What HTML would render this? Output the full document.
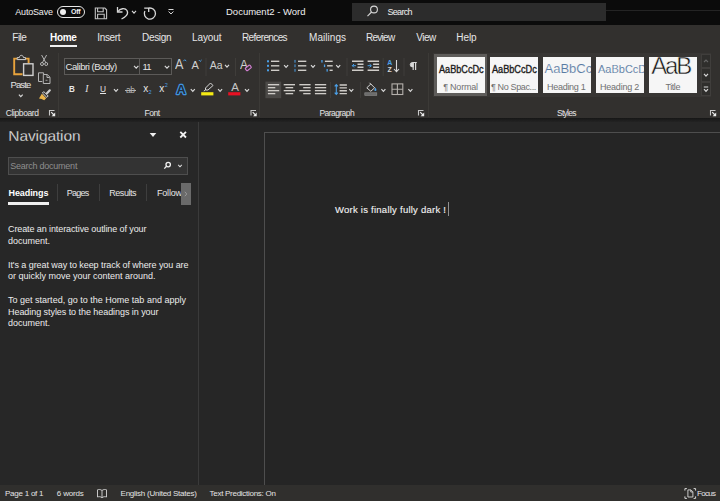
<!DOCTYPE html>
<html>
<head>
<meta charset="utf-8">
<title>Document2 - Word</title>
<style>
html,body{margin:0;padding:0;}
body{width:720px;height:501px;overflow:hidden;background:#262626;font-family:"Liberation Sans",sans-serif;color:#e8e8e8;position:relative;}
.abs{position:absolute;}
.t{position:absolute;white-space:nowrap;line-height:1;color:#e6e6e6;}
.tile{position:absolute;top:57px;height:35.6px;background:#f6f6f6;overflow:hidden;}
.tile .t{color:#222;}
</style>
</head>
<body>
<div class="abs" style="left:0px;top:0px;width:720px;height:25px;background:#0b0b0b;"></div>
<div class="abs" style="left:0px;top:24.5px;width:720px;height:93.5px;background:#32302e;"></div>
<div class="abs" style="left:0px;top:118px;width:720px;height:3.5px;background:linear-gradient(#161616,#232323);"></div>
<div class="abs" style="left:0px;top:121.5px;width:198px;height:364.5px;background:#272727;"></div>
<div class="abs" style="left:198px;top:121.5px;width:1px;height:364.5px;background:#3a3a3a;"></div>
<div class="abs" style="left:199px;top:121.5px;width:521px;height:364.5px;background:#262626;"></div>
<div class="abs" style="left:264px;top:132px;width:460px;height:360px;background:#252525;border:1px solid #4e4e4e;box-sizing:border-box;"></div>
<div class="abs" style="left:0px;top:485px;width:720px;height:16px;background:#302f2d;"></div>
<div class="t " style="left:15.30px;top:7.52px;font-size:9px;color:#f0f0f0;letter-spacing:-0.190px;">AutoSave</div>
<div class="abs" style="left:57px;top:5.8px;width:28.2px;height:12px;border:1px solid #e8e8e8;box-sizing:border-box;border-radius:7px;"></div>
<div class="abs" style="left:60.2px;top:8.8px;width:6px;height:6px;background:#f0f0f0;border-radius:3px;"></div>
<div class="t " style="left:71.00px;top:8.02px;font-size:7px;color:#f0f0f0;letter-spacing:-0.304px;font-weight:bold;">Off</div>
<div class="t " style="left:226.00px;top:6.77px;font-size:9.5px;color:#f0f0f0;">Document2 - Word</div>
<div class="abs" style="left:352px;top:2.5px;width:253.5px;height:18.5px;background:#2c2c2c;"></div>
<div class="abs" style="left:606px;top:9.5px;width:114px;height:1.5px;background:#242424;"></div>
<div class="t " style="left:387.50px;top:7.52px;font-size:9px;color:#f0f0f0;letter-spacing:-0.703px;">Search</div>
<div class="t " style="left:12.30px;top:32.52px;font-size:10px;color:#e6e6e6;letter-spacing:-0.505px;">File</div>
<div class="t " style="left:50.00px;top:32.52px;font-size:10px;color:#ffffff;letter-spacing:-0.295px;font-weight:bold;">Home</div>
<div class="t " style="left:97.30px;top:32.52px;font-size:10px;color:#e6e6e6;letter-spacing:-0.342px;">Insert</div>
<div class="t " style="left:142.00px;top:32.52px;font-size:10px;color:#e6e6e6;letter-spacing:-0.306px;">Design</div>
<div class="t " style="left:192.00px;top:32.52px;font-size:10px;color:#e6e6e6;letter-spacing:-0.085px;">Layout</div>
<div class="t " style="left:242.00px;top:32.52px;font-size:10px;color:#e6e6e6;letter-spacing:-0.615px;">References</div>
<div class="t " style="left:309.00px;top:32.52px;font-size:10px;color:#e6e6e6;letter-spacing:0.060px;">Mailings</div>
<div class="t " style="left:366.00px;top:32.52px;font-size:10px;color:#e6e6e6;letter-spacing:-0.738px;">Review</div>
<div class="t " style="left:416.30px;top:32.52px;font-size:10px;color:#e6e6e6;letter-spacing:-0.532px;">View</div>
<div class="t " style="left:456.30px;top:32.52px;font-size:10px;color:#e6e6e6;letter-spacing:-0.089px;">Help</div>
<div class="abs" style="left:50px;top:44.7px;width:27px;height:2.5px;background:#f0f0f0;"></div>
<div class="t " style="left:10.40px;top:79.77px;font-size:9.5px;color:#e6e6e6;letter-spacing:-0.823px;">Paste</div>
<div class="t " style="left:5.80px;top:108.77px;font-size:8.5px;color:#e6e6e6;letter-spacing:-0.398px;">Clipboard</div>
<div class="abs" style="left:64px;top:57.5px;width:76px;height:17.5px;background:#2f2e2c;border:1px solid #5c5a58;box-sizing:border-box;"></div>
<div class="abs" style="left:140px;top:57.5px;width:32px;height:17.5px;background:#2f2e2c;border:1px solid #5c5a58;box-sizing:border-box;border-left:none;"></div>
<div class="t " style="left:65.60px;top:61.77px;font-size:9.5px;color:#e6e6e6;letter-spacing:-0.457px;">Calibri (Body)</div>
<div class="t " style="left:142.60px;top:61.77px;font-size:9.5px;color:#e6e6e6;letter-spacing:-0.9px;">11</div>
<div class="t " style="left:144.50px;top:108.77px;font-size:8.5px;color:#e6e6e6;letter-spacing:-0.436px;">Font</div>
<div class="t " style="left:319.50px;top:108.77px;font-size:8.5px;color:#e6e6e6;letter-spacing:-0.574px;">Paragraph</div>
<div class="t " style="left:557.00px;top:108.77px;font-size:8.5px;color:#e6e6e6;letter-spacing:-0.749px;">Styles</div>
<div class="t " style="left:69.20px;top:83.77px;font-size:9.5px;color:#e6e6e6;font-weight:bold;transform:scaleX(0.85);transform-origin:0 0;">B</div>
<div class="t " style="left:85.30px;top:84.77px;font-size:9.5px;color:#e6e6e6;font-style:italic;font-family:'Liberation Serif',serif;">I</div>
<div class="t " style="left:100.00px;top:83.77px;font-size:9.5px;color:#e6e6e6;transform:scaleX(0.88);transform-origin:0 0;text-decoration:underline;">U</div>
<div class="t " style="left:126.00px;top:85.77px;font-size:8.5px;color:#b4b4b4;letter-spacing:-0.455px;">ab</div>
<div class="abs" style="left:124.8px;top:89.6px;width:11.2px;height:1px;background:#b4b4b4;"></div>
<div class="t " style="left:143.20px;top:83.52px;font-size:10px;color:#e6e6e6;">x</div>
<div class="t " style="left:148.40px;top:90.27px;font-size:5.5px;color:#4ba0e8;">2</div>
<div class="t " style="left:159.20px;top:83.52px;font-size:10px;color:#e6e6e6;">x</div>
<div class="t " style="left:164.70px;top:83.27px;font-size:5.5px;color:#4ba0e8;">2</div>
<div class="t " style="left:175.00px;top:57.02px;font-size:14px;color:#d0d0d0;transform:scaleX(0.9);transform-origin:0 0;">A</div>
<div class="t " style="left:191.50px;top:59.52px;font-size:11px;color:#d0d0d0;">A</div>
<div class="t " style="left:209.80px;top:59.77px;font-size:10.5px;color:#d0d0d0;letter-spacing:-0.043px;">Aa</div>
<div class="t " style="left:239.60px;top:57.77px;font-size:13.5px;color:#d0d0d0;transform:scaleX(0.88);transform-origin:0 0;">A</div>
<div class="t " style="left:231.20px;top:82.27px;font-size:11.5px;color:#c4c4c4;">A</div>
<div class="abs" style="left:433px;top:52.5px;width:278px;height:44.5px;background:#383634;"></div>
<div class="abs" style="left:434.4px;top:54.2px;width:52.4px;height:41.4px;background:#5e5c5a;"></div>
<div class="tile" style="left:437px;width:47.5px;">
<div class="t " style="left:1.60px;top:7.52px;font-size:10px;color:#1c1c1c;transform:scaleX(0.9119);transform-origin:0 0;-webkit-text-stroke:0.35px #1c1c1c;">AaBbCcDc</div>
<div class="t " style="left:6.20px;top:25.52px;font-size:9px;color:#707070;letter-spacing:-0.220px;">¶ Normal</div>
</div>
<div class="tile" style="left:490px;width:47.5px;">
<div class="t " style="left:1.60px;top:7.52px;font-size:10px;color:#1c1c1c;transform:scaleX(0.914);transform-origin:0 0;-webkit-text-stroke:0.35px #1c1c1c;">AaBbCcDc</div>
<div class="t " style="left:1.00px;top:25.52px;font-size:9px;color:#707070;letter-spacing:-0.369px;">¶ No Spac...</div>
</div>
<div class="tile" style="left:543px;width:47.5px;">
<div class="t " style="left:1.50px;top:5.02px;font-size:13px;color:#587aa3;-webkit-text-stroke:0.15px #f6f6f6;">AaBbCc</div>
<div class="t " style="left:4.00px;top:25.52px;font-size:9px;color:#707070;letter-spacing:-0.279px;">Heading 1</div>
</div>
<div class="tile" style="left:596px;width:47.5px;">
<div class="t " style="left:2.00px;top:6.52px;font-size:11px;color:#587aa3;-webkit-text-stroke:0.1px #f6f6f6;">AaBbCcD</div>
<div class="t " style="left:4.00px;top:25.52px;font-size:9px;color:#707070;letter-spacing:-0.217px;">Heading 2</div>
</div>
<div class="tile" style="left:649px;width:47.5px;">
<div class="t " style="left:2.20px;top:-3.48px;font-size:24px;color:#161616;letter-spacing:-2.182px;-webkit-text-stroke:0.5px #f6f6f6;">AaB</div>
<div class="t " style="left:16.40px;top:25.52px;font-size:9px;color:#707070;letter-spacing:-0.417px;">Title</div>
</div>
<div class="t " style="left:8.30px;top:127.77px;font-size:15.5px;color:#f6f6f6;letter-spacing:-0.104px;-webkit-text-stroke:0.3px #272727;">Navigation</div>
<div class="abs" style="left:8px;top:157px;width:180px;height:18px;background:#333333;border:1px solid #4e4e4e;box-sizing:border-box;"></div>
<div class="t " style="left:10.20px;top:161.52px;font-size:9px;color:#8e8e8e;letter-spacing:-0.239px;">Search document</div>
<div class="t " style="left:8.50px;top:188.52px;font-size:9px;color:#ffffff;letter-spacing:-0.087px;font-weight:bold;">Headings</div>
<div class="abs" style="left:8px;top:202px;width:40.5px;height:2.5px;background:#f0f0f0;"></div>
<div class="t " style="left:66.80px;top:188.52px;font-size:9px;color:#e6e6e6;letter-spacing:-0.755px;">Pages</div>
<div class="t " style="left:109.30px;top:188.52px;font-size:9px;color:#e6e6e6;letter-spacing:-0.468px;">Results</div>
<div class="t " style="left:157.00px;top:188.52px;font-size:9px;color:#e6e6e6;letter-spacing:-0.201px;">Follow</div>
<div class="abs" style="left:57px;top:184px;width:1px;height:17px;background:#3e3e3e;"></div>
<div class="abs" style="left:99px;top:184px;width:1px;height:17px;background:#3e3e3e;"></div>
<div class="abs" style="left:146px;top:184px;width:1px;height:17px;background:#3e3e3e;"></div>
<div class="abs" style="left:181px;top:183px;width:9.5px;height:22px;background:#6a6a6a;"></div>
<div class="t " style="left:8.00px;top:224.52px;font-size:9px;color:#ececec;letter-spacing:-0.100px;">Create an interactive outline of your</div>
<div class="t " style="left:8.00px;top:236.52px;font-size:9px;color:#ececec;">document.</div>
<div class="t " style="left:8.00px;top:260.52px;font-size:9px;color:#ececec;letter-spacing:-0.072px;">It's a great way to keep track of where you are</div>
<div class="t " style="left:8.00px;top:271.52px;font-size:9px;color:#ececec;">or quickly move your content around.</div>
<div class="t " style="left:8.00px;top:295.52px;font-size:9px;color:#ececec;letter-spacing:0.009px;">To get started, go to the Home tab and apply</div>
<div class="t " style="left:8.00px;top:307.52px;font-size:9px;color:#ececec;letter-spacing:-0.057px;">Heading styles to the headings in your</div>
<div class="t " style="left:8.00px;top:318.52px;font-size:9px;color:#ececec;">document.</div>
<div class="t " style="left:335.00px;top:204.77px;font-size:9.5px;color:#f2f2f2;letter-spacing:0.246px;-webkit-text-stroke:0.12px #f2f2f2;">Work is finally fully dark !</div>
<div class="abs" style="left:448px;top:202px;width:1px;height:14px;background:#909090;"></div>
<div class="t " style="left:5.00px;top:489.52px;font-size:8px;color:#e4e4e4;letter-spacing:-0.242px;">Page 1 of 1</div>
<div class="t " style="left:56.80px;top:489.52px;font-size:8px;color:#e4e4e4;letter-spacing:-0.169px;">6 words</div>
<div class="t " style="left:120.60px;top:489.52px;font-size:8px;color:#e4e4e4;letter-spacing:-0.255px;">English (United States)</div>
<div class="t " style="left:209.50px;top:489.52px;font-size:8px;color:#e4e4e4;letter-spacing:-0.273px;">Text Predictions: On</div>
<div class="t " style="left:697.00px;top:489.52px;font-size:8px;color:#e4e4e4;letter-spacing:-0.696px;">Focus</div>
<svg class="abs" style="left:0;top:0;" width="720" height="501" viewBox="0 0 720 501">
<g fill="none" stroke="#c4c4c4" stroke-width="1.1"><path d="M95.3,8 H104.8 L106.6,9.8 V18.7 H95.3 Z"/><path d="M97.6,8 V11.8 H103.2 V8"/><path d="M97.6,18.7 V14.3 H104.2 V18.7"/></g>
<g fill="none" stroke="#d8d8d8" stroke-width="1.3"><path d="M117.5,7 V12 H122.5"/><path d="M118,11.5 C120,8.5 125,7.5 127,10.5 C129,14 125.5,17 121.5,19"/></g>
<path d="M132,10.9 L134,13.1 L136,10.9" fill="none" stroke="#d8d8d8" stroke-width="1.1"/>
<g fill="none" stroke="#d8d8d8" stroke-width="1.3"><path d="M148.8,8.1 A5.6,5.6 0 1 1 144.9,11"/><path d="M144.2,8.1 H148.7 V12"/></g>
<path d="M168.5,9.5 H173.5" stroke="#d8d8d8" stroke-width="1"/><path d="M168.6,11.5 L171,14 L173.4,11.5" fill="none" stroke="#d8d8d8" stroke-width="1"/>
<g fill="none" stroke="#d8d8d8" stroke-width="1.1"><circle cx="374" cy="9.5" r="3.4"/><path d="M371.6,12 L367.5,16.2"/></g>
<g fill="none" stroke="#e8a33c" stroke-width="1.9"><path d="M17,58.6 H14.2 V74.3 H22.5"/><path d="M25.6,58.6 H28.6 V63"/></g>
<path d="M17.2,59.6 V57.6 H19.3 C19.6,54.6 23.2,54.6 23.5,57.6 H25.6 V59.6 Z" fill="#33312f" stroke="#cfcfcf" stroke-width="1"/>
<rect x="23.6" y="63.8" width="9.4" height="11.6" fill="#33312f" stroke="#cfcfcf" stroke-width="1.4"/>
<path d="M18.900000000000002,94.7 L20.8,96.7 L22.7,94.7" fill="none" stroke="#d8d8d8" stroke-width="1.2"/>
<g fill="none" stroke="#b4b4b4" stroke-width="1"><path d="M41.6,55 L46,63"/><path d="M46.6,55 L42.2,63"/><circle cx="42" cy="64" r="1.5"/><circle cx="46.2" cy="64" r="1.5"/></g>
<g fill="none" stroke="#b4b4b4" stroke-width="1"><path d="M42.3,81.5 H38.5 V72.8 H43.6 V74.5"/><path d="M43.3,74.5 H47.3 L50,77.2 V83.5 H43.3 Z"/><path d="M47,74.8 V77.5 H49.7"/><path d="M45.5,80.3 H47.5" stroke-width="0.8"/></g>
<g><path d="M49.8,90.3 L47,93.2" stroke="#cfcfcf" stroke-width="2.2" stroke-linecap="round"/><path d="M43.8,91.6 L48.2,96 L46.8,97.4 L42.4,93 Z" fill="#33312f" stroke="#e8e8e8" stroke-width="0.9"/><path d="M41.8,93.8 L46.2,98.2 L44.2,100.2 C42.5,99.2 40.8,98.6 39,98.4 Z" fill="#eab44a"/></g>
<path d="M54.5,110.5 H49.5 V115.5" fill="none" stroke="#c8c8c8" stroke-width="1.1"/><path d="M51.2,112.2 L54,115" stroke="#e8e8e8" stroke-width="1.2"/><path d="M55.2,112.6 V116.2 H51.6 Z" fill="#ececec"/>
<path d="M58.5,53 V117" stroke="#3c3a37" stroke-width="1"/>
<path d="M259.5,53 V117" stroke="#3c3a37" stroke-width="1"/>
<path d="M428.5,53 V117" stroke="#3c3a37" stroke-width="1"/>
<path d="M134.0,65.9 L136.2,68.1 L138.39999999999998,65.9" fill="none" stroke="#d8d8d8" stroke-width="1.2"/>
<path d="M164.8,65.9 L167,68.1 L169.2,65.9" fill="none" stroke="#d8d8d8" stroke-width="1.2"/>
<path d="M183.3,61.2 L184.8,59.7 L186.3,61.2" fill="none" stroke="#4ba0e8" stroke-width="1"/>
<path d="M198.8,60 L200.2,61.4 L201.6,60" fill="none" stroke="#4ba0e8" stroke-width="1"/>
<path d="M225,64.9 L227,67.1 L229,64.9" fill="none" stroke="#d8d8d8" stroke-width="1.2"/>
<path d="M206,58 V76" stroke="#3f3d3a" stroke-width="1"/>
<path d="M235.5,58 V76" stroke="#3f3d3a" stroke-width="1"/>
<path d="M347,58 V76" stroke="#3f3d3a" stroke-width="1"/>
<path d="M383.2,58 V76" stroke="#3f3d3a" stroke-width="1"/>
<path d="M404,58 V76" stroke="#3f3d3a" stroke-width="1"/>
<path d="M330.5,82 V98" stroke="#3f3d3a" stroke-width="1"/>
<path d="M360.4,82 V98" stroke="#3f3d3a" stroke-width="1"/>
<rect x="-2.9" y="-1.6" width="5.8" height="3.2" rx="0.8" transform="translate(248.3,67.9) rotate(-38)" fill="#33312f" stroke="#d07fd0" stroke-width="1.2"/>
<path d="M114,89.10000000000001 L116,91.3 L118,89.10000000000001" fill="none" stroke="#d8d8d8" stroke-width="1.2"/>
<text x="176.6" y="93.8" font-family="Liberation Sans" font-size="13" font-weight="bold" fill="#1f2d3d" stroke="#3f94e0" stroke-width="2.4" stroke-linejoin="round" paint-order="stroke">A</text>
<path d="M190.8,89.2 L192.8,91.39999999999999 L194.8,89.2" fill="none" stroke="#d8d8d8" stroke-width="1.2"/>
<g fill="none" stroke="#d8d8d8" stroke-width="1"><path d="M210.5,83 L213,85.5 L208,90 L205.5,90 L205.5,88 Z"/><path d="M205.3,90.2 L203.8,91"/></g>
<rect x="201.2" y="92.2" width="12.2" height="3.2" fill="#f5ea14"/>
<path d="M218.1,89.2 L220.1,91.39999999999999 L222.1,89.2" fill="none" stroke="#d8d8d8" stroke-width="1.2"/>
<rect x="228.2" y="92.2" width="12.2" height="3.2" fill="#e81123"/>
<path d="M245,89.2 L247,91.39999999999999 L249,89.2" fill="none" stroke="#d8d8d8" stroke-width="1.2"/>
<path d="M256.0,110.5 H251.0 V115.5" fill="none" stroke="#c8c8c8" stroke-width="1.1"/><path d="M252.7,112.2 L255.5,115" stroke="#e8e8e8" stroke-width="1.2"/><path d="M256.7,112.6 V116.2 H253.1 Z" fill="#ececec"/>
<rect x="267" y="60.3" width="2" height="2" fill="#4ba0e8"/>
<path d="M271,61.3 H279.3" stroke="#cfccc8" stroke-width="1.4"/>
<rect x="267" y="64.8" width="2" height="2" fill="#4ba0e8"/>
<path d="M271,65.8 H279.3" stroke="#cfccc8" stroke-width="1.4"/>
<rect x="267" y="69.3" width="2" height="2" fill="#4ba0e8"/>
<path d="M271,70.3 H279.3" stroke="#cfccc8" stroke-width="1.4"/>
<path d="M284.1,65.2 L286.1,67.39999999999999 L288.1,65.2" fill="none" stroke="#d8d8d8" stroke-width="1.2"/>
<rect x="294.5" y="59.9" width="1" height="2.8" fill="#4ba0e8"/>
<path d="M298,61.3 H306.3" stroke="#cfccc8" stroke-width="1.4"/>
<rect x="294.5" y="64.39999999999999" width="1" height="2.8" fill="#4ba0e8"/>
<path d="M298,65.8 H306.3" stroke="#cfccc8" stroke-width="1.4"/>
<rect x="294.5" y="68.89999999999999" width="1" height="2.8" fill="#4ba0e8"/>
<path d="M298,70.3 H306.3" stroke="#cfccc8" stroke-width="1.4"/>
<path d="M311,65.2 L313,67.39999999999999 L315,65.2" fill="none" stroke="#d8d8d8" stroke-width="1.2"/>
<rect x="321.3" y="60.0" width="1.3" height="2.6" fill="#4ba0e8"/><path d="M324.90000000000003,61.3 H332.7" stroke="#cfccc8" stroke-width="1.4"/>
<rect x="323.90000000000003" y="64.5" width="1.3" height="2.6" fill="#4ba0e8"/><path d="M327.1,65.8 H332.7" stroke="#cfccc8" stroke-width="1.4"/>
<rect x="326.5" y="69.0" width="1.3" height="2.6" fill="#4ba0e8"/><path d="M329.6,70.3 H332.7" stroke="#cfccc8" stroke-width="1.4"/>
<path d="M336.2,65.2 L338.2,67.39999999999999 L340.2,65.2" fill="none" stroke="#d8d8d8" stroke-width="1.2"/>
<path d="M352,61.2 H363.5 M352,70.2 H363.5 M357.5,64.2 H363.5 M357.5,67.2 H363.5" stroke="#cfccc8" stroke-width="1.35" fill="none"/>
<path d="M356,65.7 H352.3 M354,64.0 L352.3,65.7 L354,67.4" stroke="#4ba0e8" stroke-width="1" fill="none"/>
<path d="M367.6,61.2 H379.1 M367.6,70.2 H379.1 M373.1,64.2 H379.1 M373.1,67.2 H379.1" stroke="#cfccc8" stroke-width="1.35" fill="none"/>
<path d="M367.6,65.7 H371.3 M369.6,64.0 L371.3,65.7 L369.6,67.4" stroke="#4ba0e8" stroke-width="1" fill="none"/>
<text x="387.3" y="65.3" font-family="Liberation Sans" font-size="7" font-weight="bold" fill="#4ba0e8">A</text>
<text x="387.5" y="72" font-family="Liberation Sans" font-size="7" font-weight="bold" fill="#d8d8d8">Z</text>
<path d="M396.5,60 V71.5 M394,69 L396.5,71.7 L399,69" fill="none" stroke="#d8d8d8" stroke-width="1.1"/>
<path d="M416.8,62.5 H412.4 M413.2,62.5 V70 M415.6,62.5 V70" fill="none" stroke="#d8d8d8" stroke-width="1.2"/><path d="M413.2,62.5 H412.4 A2.2,2.2 0 0 0 412.4,66.9 H413.2 Z" fill="#d8d8d8" stroke="#d8d8d8" stroke-width="0.8"/>
<rect x="265.4" y="81.6" width="15.8" height="16.6" fill="#4b4947"/>
<path d="M267.9,84.7 H279.2" stroke="#cfccc8" stroke-width="1.35"/>
<path d="M267.9,87.67 H275.3" stroke="#cfccc8" stroke-width="1.35"/>
<path d="M267.9,90.64 H279.2" stroke="#cfccc8" stroke-width="1.35"/>
<path d="M267.9,93.61 H275.3" stroke="#cfccc8" stroke-width="1.35"/>
<path d="M283.7,84.7 H295.0" stroke="#cfccc8" stroke-width="1.35"/>
<path d="M285.5,87.67 H293.2" stroke="#cfccc8" stroke-width="1.35"/>
<path d="M283.7,90.64 H295.0" stroke="#cfccc8" stroke-width="1.35"/>
<path d="M285.5,93.61 H293.2" stroke="#cfccc8" stroke-width="1.35"/>
<path d="M299.3,84.7 H310.6" stroke="#cfccc8" stroke-width="1.35"/>
<path d="M303.2,87.67 H310.6" stroke="#cfccc8" stroke-width="1.35"/>
<path d="M299.3,90.64 H310.6" stroke="#cfccc8" stroke-width="1.35"/>
<path d="M303.2,93.61 H310.6" stroke="#cfccc8" stroke-width="1.35"/>
<path d="M314.9,84.7 H326.2" stroke="#cfccc8" stroke-width="1.35"/>
<path d="M314.9,87.67 H326.2" stroke="#cfccc8" stroke-width="1.35"/>
<path d="M314.9,90.64 H326.2" stroke="#cfccc8" stroke-width="1.35"/>
<path d="M314.9,93.61 H326.2" stroke="#cfccc8" stroke-width="1.35"/>
<path d="M336.3,85 V94 M334.7,86.4 L336.3,84.6 L337.9,86.4 M334.7,92.6 L336.3,94.4 L337.9,92.6" fill="none" stroke="#4ba0e8" stroke-width="1.1"/>
<path d="M339.6,85 H346.9 M339.6,87.85 H346.9 M339.6,90.7 H346.9 M339.6,93.55 H346.9" stroke="#cfccc8" stroke-width="1.35"/>
<path d="M349.3,89.2 L351.3,91.39999999999999 L353.3,89.2" fill="none" stroke="#d8d8d8" stroke-width="1.2"/>
<g fill="none" stroke="#d8d8d8" stroke-width="1"><path d="M366.8,87.8 L370.8,84 L374.6,87.8 L370.8,91.3 Z"/><path d="M369.5,82.8 L371.3,84.6"/></g><path d="M375.3,87.4 C376.9,89.4 376.9,91 375.3,91 C374,91 374,89.4 375.3,87.4 Z" fill="#4ba0e8"/>
<rect x="364.8" y="92.8" width="12" height="2.6" fill="#6b6b6b" stroke="#8f8f8f" stroke-width="0.6"/>
<path d="M381.4,89.2 L383.4,91.39999999999999 L385.4,89.2" fill="none" stroke="#d8d8d8" stroke-width="1.2"/>
<g fill="none" stroke="#b4b0ac" stroke-width="1.1"><rect x="392" y="83.9" width="10.8" height="10.6"/><path d="M397.4,83.9 V94.5 M392,89.2 H402.8"/></g>
<path d="M408.4,89.2 L410.4,91.39999999999999 L412.4,89.2" fill="none" stroke="#d8d8d8" stroke-width="1.2"/>
<path d="M423.5,110.5 H418.5 V115.5" fill="none" stroke="#c8c8c8" stroke-width="1.1"/><path d="M420.2,112.2 L423,115" stroke="#e8e8e8" stroke-width="1.2"/><path d="M424.2,112.6 V116.2 H420.6 Z" fill="#ececec"/>
<rect x="701.5" y="54.5" width="9" height="13" fill="#2f2e2c" stroke="#403e3c" stroke-width="1"/><path d="M704,62 L706,60 L708,62" fill="none" stroke="#666" stroke-width="1.1"/>
<rect x="701.5" y="68.5" width="9" height="13" fill="#2f2e2c" stroke="#403e3c" stroke-width="1"/>
<path d="M704,73.9 L706,76.1 L708,73.9" fill="none" stroke="#d8d8d8" stroke-width="1.2"/>
<rect x="701.5" y="82.5" width="9" height="13" fill="#2f2e2c" stroke="#403e3c" stroke-width="1"/><path d="M703.8,87 H708.2" stroke="#d8d8d8" stroke-width="1"/>
<path d="M704,89.10000000000001 L706,91.3 L708,89.10000000000001" fill="none" stroke="#d8d8d8" stroke-width="1.2"/>
<path d="M715.5,110.5 H710.5 V115.5" fill="none" stroke="#c8c8c8" stroke-width="1.1"/><path d="M712.2,112.2 L715,115" stroke="#e8e8e8" stroke-width="1.2"/><path d="M716.2,112.6 V116.2 H712.6 Z" fill="#ececec"/>
<path d="M149.7,133 H156.3 L153,136.9 Z" fill="#f0f0f0"/>
<path d="M180.3,131.8 L186,137.5 M186,131.8 L180.3,137.5" stroke="#f2f2f2" stroke-width="1.8"/>
<g fill="none" stroke="#f0f0f0" stroke-width="1.3"><circle cx="168.2" cy="164.6" r="2.2"/><path d="M166.5,166.3 L164.3,168.6"/></g>
<path d="M178.2,164.8 L180,166.8 L181.8,164.8" fill="none" stroke="#d8d8d8" stroke-width="1.1"/>
<path d="M184.8,191.8 L186.8,194 L184.8,196.2" fill="none" stroke="#999" stroke-width="1"/>
<g fill="none" stroke="#d8d8d8" stroke-width="0.9"><path d="M102,490.5 C100.5,489.3 98.8,489.3 97.5,489.8 V497 C98.8,496.5 100.5,496.5 102,497.7 C103.5,496.5 105.2,496.5 106.5,497 V489.8 C105.2,489.3 103.5,489.3 102,490.5 Z"/><path d="M102,490.5 V497.7"/></g>
<g fill="none" stroke="#d8d8d8" stroke-width="1"><path d="M684.9,490.6 V488.6 H686.9 M693.6,488.6 H695.6 V490.6 M695.6,496.4 V498.4 H693.6 M686.9,498.4 H684.9 V496.4"/><path d="M687.9,489.9 H691 L692.9,491.8 V497 H687.9 Z M690.8,490 V492 H692.8" stroke-width="0.9"/></g>
</svg>
</body>
</html>
